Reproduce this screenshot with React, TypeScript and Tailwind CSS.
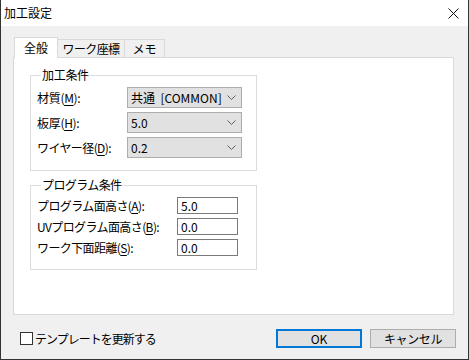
import React from "react";

const Chevron = () => (
  <svg width="9" height="5" viewBox="0 0 9 5" className="shrink-0">
    <path d="M0.5 0.5 L4.5 4.5 L8.5 0.5" fill="none" stroke="#606060" strokeWidth="1" />
  </svg>
);

const U = ({ c }: { c: string }) => <span className="underline underline-offset-[2px]">{c}</span>;

const Combo = ({ value }: { value: string }) => (
  <div className="w-[115px] h-[21px] border border-[#adadad] bg-[#e1e1e1] flex items-center justify-between pl-[3px] pr-[5px]">
    <span className="whitespace-pre">{value}</span>
    <Chevron />
  </div>
);

const Input = ({ value }: { value: string }) => (
  <div className="w-[61px] h-[17px] border border-[#7a7a7a] bg-white flex items-center pl-[3px]">
    <span>{value}</span>
  </div>
);

export default function App() {
  return (
    <div className="w-[469px] h-[360px] flex flex-col border-x border-b border-[#333] bg-[#f0f0f0] text-[12px] leading-[16px] text-black font-['Noto_Sans_CJK_JP',sans-serif]">
      <div className="h-[26px] bg-white flex items-center justify-between pl-[3px] pr-[9px]">
        <span>加工設定</span>
        <svg width="11" height="11" viewBox="0 0 11 11">
          <path d="M0.5 0.5 L10.5 10.5 M10.5 0.5 L0.5 10.5" stroke="#111" strokeWidth="1" />
        </svg>
      </div>
      <div className="flex-1 flex flex-col pl-[12px] pt-[11px]">
        <div className="flex items-end h-[21px] pl-[1px]">
          <div className="relative z-10 w-[44px] h-[21px] bg-white border border-b-0 border-[#d9d9d9] flex items-center justify-center pb-[1px]">
            全般
          </div>
          <div className="w-[67px] h-[19px] border border-l-0 border-[#d9d9d9] flex items-center justify-center tracking-[-0.6px]">
            ワーク座標
          </div>
          <div className="w-[40px] h-[19px] border border-l-0 border-[#d9d9d9] flex items-center justify-center">
            メモ
          </div>
        </div>
        <div className="-mt-[1px] w-[441px] h-[258px] bg-white border border-[#d9d9d9] flex flex-col pl-[16px] pt-[9px]">
          <fieldset className="w-[227px] h-[104px] border border-[#dcdcdc] pl-[6px] pr-0 pb-0 pt-0 m-0">
            <legend className="ml-[4px] px-[1px] tracking-[-0.3px]">加工条件</legend>
            <div className="flex flex-col gap-[4px] mt-[4px]">
              <div className="flex items-center">
                <span className="w-[90px] tracking-[-0.3px]">材質(<U c="M" />):</span>
                <Combo value="共通  [COMMON]" />
              </div>
              <div className="flex items-center">
                <span className="w-[90px] tracking-[-0.3px]">板厚(<U c="H" />):</span>
                <Combo value="5.0" />
              </div>
              <div className="flex items-center">
                <span className="w-[90px] tracking-[-0.6px]">ワイヤー径(<U c="D" />):</span>
                <Combo value="0.2" />
              </div>
            </div>
          </fieldset>
          <fieldset className="mt-[6px] w-[227px] h-[93px] border border-[#dcdcdc] pl-[6px] pr-0 pb-0 pt-0 m-0">
            <legend className="ml-[4px] px-[1px] tracking-[-0.6px]">プログラム条件</legend>
            <div className="flex flex-col gap-[4px] mt-[4px]">
              <div className="flex items-center">
                <span className="w-[140px] tracking-[-0.6px]">プログラム面高さ(<U c="A" />):</span>
                <Input value="5.0" />
              </div>
              <div className="flex items-center">
                <span className="w-[140px] tracking-[-0.6px]">UVプログラム面高さ(<U c="B" />):</span>
                <Input value="0.0" />
              </div>
              <div className="flex items-center">
                <span className="w-[140px] tracking-[-0.6px]">ワーク下面距離(<U c="S" />):</span>
                <Input value="0.0" />
              </div>
            </div>
          </fieldset>
        </div>
        <div className="flex items-center mt-[14px] pr-[12px]">
          <div className="ml-[7px] w-[13px] h-[13px] border border-[#333] bg-white" />
          <span className="ml-[2px] tracking-[-1px]">テンプレートを更新する</span>
          <div className="flex-1" />
          <button className="w-[86px] h-[19px] border-2 border-[#0078d7] bg-[#e1e1e1] flex items-center justify-center">OK</button>
          <button className="ml-[8px] w-[86px] h-[19px] border border-[#adadad] bg-[#e1e1e1] flex items-center justify-center tracking-[-0.4px]">キャンセル</button>
        </div>
      </div>
    </div>
  );
}
